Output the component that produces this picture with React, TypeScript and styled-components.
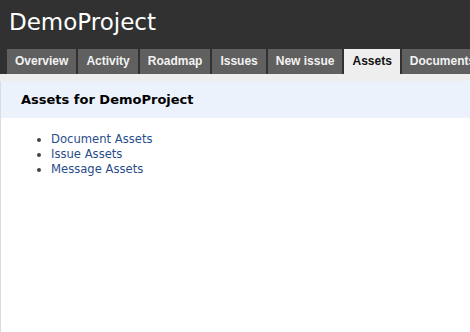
import React from 'react'
import styled, { createGlobalStyle } from 'styled-components'

const tabs = ['Overview', 'Activity', 'Roadmap', 'Issues', 'New issue', 'Assets', 'Documents']
const assetLinks = ['Document Assets', 'Issue Assets', 'Message Assets']

export default function App() {
  return (
    <>
      <GlobalStyle />
      <Page>
        <Header>
          <ProjectTitle>DemoProject</ProjectTitle>
          <MainMenu>
            {tabs.map((tab) => (
              <Tab key={tab} $selected={tab === 'Assets'}>
                {tab}
              </Tab>
            ))}
          </MainMenu>
        </Header>
        <Strip />
        <Content>
          <TitleBar>Assets for DemoProject</TitleBar>
          <AssetList>
            {assetLinks.map((label) => (
              <li key={label}>
                <AssetLink href="#">{label}</AssetLink>
              </li>
            ))}
          </AssetList>
        </Content>
      </Page>
    </>
  )
}

const GlobalStyle = createGlobalStyle`
  html, body {
    margin: 0;
    padding: 0;
    background: #fff;
    overflow: hidden;
  }
  body {
    font-family: "DejaVu Sans", "Liberation Sans", sans-serif;
  }
`

const Page = styled.div`
  width: 470px;
  height: 332px;
  display: flex;
  flex-direction: column;
  overflow: hidden;
`

const Header = styled.div`
  background-color: #313131;
  padding: 7px 0 0 0;
`

const ProjectTitle = styled.h1`
  margin: 0 0 11px 9px;
  font-family: "DejaVu Sans", sans-serif;
  font-weight: normal;
  font-size: 23px;
  line-height: 31px;
  color: #fff;
`

const MainMenu = styled.ul`
  display: flex;
  gap: 2px;
  margin: 0;
  padding: 0 0 0 7px;
  list-style: none;
  white-space: nowrap;
  overflow: hidden;
`

const Tab = styled.li<{ $selected?: boolean }>`
  flex: none;
  height: 25px;
  line-height: 25px;
  padding: 0 8px;
  font-family: "Liberation Sans", Arial, sans-serif;
  font-weight: bold;
  font-size: 12px;
  background-color: ${(p) => (p.$selected ? '#eeeeee' : '#606060')};
  color: ${(p) => (p.$selected ? '#111' : '#f2f2f2')};
`

const Strip = styled.div`
  height: 7px;
  background-color: #eeeeee;
`

const Content = styled.div`
  flex: 1;
  border-left: 1px solid #dcdcdc;
  background: #fff;
`

const TitleBar = styled.h2`
  margin: 0;
  height: 37px;
  line-height: 38px;
  padding-left: 20px;
  background-color: #ebf2fc;
  font-family: "DejaVu Sans", sans-serif;
  font-weight: bold;
  font-size: 13px;
  color: #000;
`

const AssetList = styled.ul`
  margin: 14px 0 0 0;
  padding-left: 50px;
  font-family: "DejaVu Sans", sans-serif;
  font-size: 11.6px;
  line-height: 15px;
  color: #444;
`

const AssetLink = styled.a`
  color: #2a4d8a;
  text-decoration: none;
`
